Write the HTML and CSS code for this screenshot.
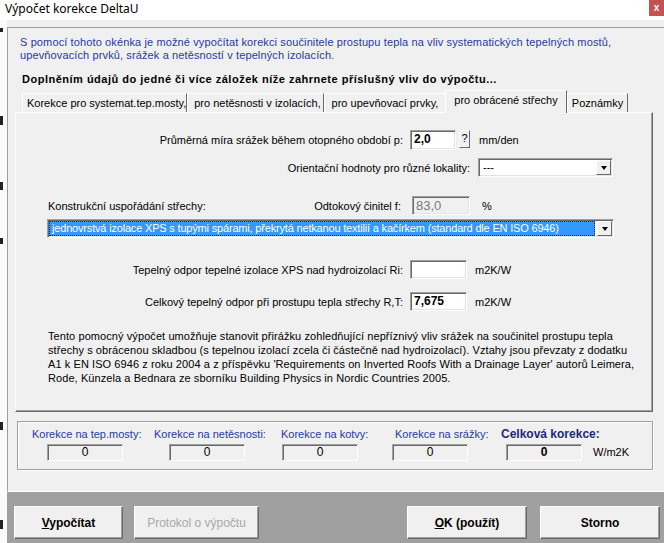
FILE: index.html
```html
<!DOCTYPE html>
<html lang="cs">
<head>
<meta charset="utf-8">
<title>Výpočet korekce DeltaU</title>
<link rel="stylesheet" href="styles.css">
</head>
<body>
<div class="titlebar"><span class="title">Výpočet korekce DeltaU</span><span class="close">x</span></div>
<div class="frame">
  <div class="leftstrip">
    <i class="tick t1"></i><i class="tick t2"></i><i class="tick t3"></i><i class="tick t4"></i><i class="tick t5"></i><i class="tick t6"></i>
  </div>
  <div class="dialog">
    <div class="panel">
      <p class="info">S pomocí tohoto okénka je možné vypočítat korekci součinitele prostupu tepla na vliv systematických tepelných mostů,<br>upevňovacích prvků, srážek a netěsností v tepelných izolacích.</p>
      <p class="heading">Doplněním údajů do jedné či více záložek níže zahrnete příslušný vliv do výpočtu...</p>
      <div class="tabs">
        <div class="tab tw1">Korekce pro systemat.tep.mosty,</div>
        <div class="tab tw2">pro netěsnosti v izolacích,</div>
        <div class="tab tw3">pro upevňovací prvky,</div>
        <div class="tab tw4 active">pro obrácené střechy</div>
        <div class="tab tw5">Poznámky</div>
      </div>
      <div class="tabpanel">
        <div class="row r1">
          <span class="lbl w387">Průměrná míra srážek během otopného období p:</span>
          <span class="edit e1">2,0</span>
          <span class="qbtn">?</span>
          <span class="unit u1">mm/den</span>
        </div>
        <div class="row r2">
          <span class="lbl w454">Orientační hodnoty pro různé lokality:</span>
          <div class="select s1"><span class="val">---</span><span class="arrow"></span></div>
        </div>
        <div class="row r3">
          <span class="lbl l-konst">Konstrukční uspořádání střechy:</span>
          <span class="lbl l-odt">Odtokový činitel f:</span>
          <span class="edit e-dis">83,0</span>
          <span class="unit u3">%</span>
        </div>
        <div class="select s2"><span class="val hl">jednovrstvá izolace XPS s tupými spárami, překrytá netkanou textilií a kačírkem (standard dle EN ISO 6946)</span><span class="arrow"></span></div>
        <div class="row r5">
          <span class="lbl w387">Tepelný odpor tepelné izolace XPS nad hydroizolací Ri:</span>
          <span class="edit e2"></span>
          <span class="unit u5">m2K/W</span>
        </div>
        <div class="row r6">
          <span class="lbl w387">Celkový tepelný odpor při prostupu tepla střechy R,T:</span>
          <span class="edit e2">7,675</span>
          <span class="unit u5">m2K/W</span>
        </div>
        <p class="note">Tento pomocný výpočet umožňuje stanovit přirážku zohledňující nepříznivý vliv srážek na součinitel prostupu tepla<br>střechy s obrácenou skladbou (s tepelnou izolací zcela či částečně nad hydroizolací). Vztahy jsou převzaty z dodatku<br>A1 k EN ISO 6946 z roku 2004 a z příspěvku 'Requirements on Inverted Roofs With a Drainage Layer' autorů Leimera,<br>Rode, Künzela a Bednara ze sborníku Building Physics in Nordic Countries 2005.</p>
      </div>
      <div class="group">
        <div class="gcol gc1"><span class="gl">Korekce na tep.mosty:</span><span class="gbox gb15">0</span></div>
        <div class="gcol gc2"><span class="gl">Korekce na netěsnosti:</span><span class="gbox gb15">0</span></div>
        <div class="gcol gc3"><span class="gl">Korekce na kotvy:</span><span class="gbox gb1">0</span></div>
        <div class="gcol gc4"><span class="gl gl3">Korekce na srážky:</span><span class="gbox">0</span></div>
        <div class="gcol gc5"><span class="gl total">Celková korekce:</span><div class="gline"><span class="gbox gb5 bold">0</span><span class="gunit">W/m2K</span></div></div>
      </div>
    </div>
    <div class="btnbar">
      <div class="btn b1"><span><u>V</u>ypočítat</span></div>
      <div class="btn b2 disabled">Protokol o výpočtu</div>
      <div class="btn b3"><span><u>O</u>K (použít)</span></div>
      <div class="btn b4">Storno</div>
    </div>
  </div>
</div>
</body>
</html>
```

FILE: styles.css
```css
* { box-sizing: border-box; }
html, body { margin: 0; padding: 0; }
body {
  width: 664px; height: 543px; overflow: hidden; background: #fff;
  font-family: "Liberation Sans", Arial, sans-serif; font-size: 11px; color: #000;
}
.titlebar { height: 20px; position: relative; background: #fff; }
.title {
  display: block; padding-left: 5px; font-family: "Noto Sans", "Open Sans", sans-serif;
  font-size: 12px; line-height: 17px; color: #000;
}
.close {
  position: absolute; right: 0; top: 0; width: 15px; height: 16px; background: #c75050;
  color: #fff; font: bold 10px/15px "Liberation Sans", sans-serif; text-align: center;
}
.frame { display: flex; height: 523px; }
.leftstrip { width: 7px; position: relative; background: #fbfbfb; }
.tick { position: absolute; left: 0; width: 3px; background: #222; }
.t1 { top: 8px; height: 4px; }
.t2 { top: 96px; height: 9px; }
.t3 { top: 162px; height: 8px; }
.t4 { top: 218px; height: 6px; }
.t5 { top: 402px; height: 8px; }
.t6 { top: 500px; height: 9px; }

.dialog { flex: 1; display: flex; flex-direction: column; background: #f0f0f0; padding-top: 7px; }
.panel {
  height: 465px; border-top: 1px solid #a0a0a0; border-left: 1px solid #a0a0a0;
  border-bottom: 1px solid #fff;
}
.info { margin: 0; padding: 8px 0 0 12px; color: #1f3aa6; line-height: 13px; white-space: nowrap; letter-spacing: 0.12px; }
.heading { margin: 10px 0 0 14px; font-weight: bold; letter-spacing: 0.5px; line-height: 14px; white-space: nowrap; }

.tabs { display: flex; align-items: flex-end; height: 21px; margin: 5px 0 0 14px; position: relative; z-index: 1; }
.tab {
  height: 19px; border-left: 1px solid #fff; border-top: 1px solid #fff; border-right: 1px solid #696969;
  text-align: center; line-height: 18px; white-space: nowrap; background: #f0f0f0;
}
.tw1 { width: 165px; padding-left: 4px; }
.tw2 { width: 137px; padding-left: 4px; }
.tw3 { width: 121px; border-right: none; }
.tw4 { width: 122px; }
.tw5 { width: 61px; }
.tab.active { height: 23px; margin-bottom: -1px; line-height: 19px; }

.tabpanel {
  height: 300px; margin: 0 11px 0 7px; border-top: 1px solid #fff; border-left: 1px solid #fff;
  border-right: 1px solid #696969; border-bottom: 1px solid #696969;
  box-shadow: inset -1px -1px #a0a0a0;
}
.row { display: flex; align-items: center; }
.lbl { white-space: nowrap; }
.w387 { width: 387px; text-align: right; }
.w454 { width: 454px; text-align: right; }
.r1 { margin-top: 17px; height: 20px; }
.r2 { margin-top: 8px; height: 19px; }
.r3 { margin-top: 19px; height: 19px; }
.r5 { margin-top: 22px; height: 19px; }
.r6 { margin-top: 13px; height: 19px; }
.l-konst { margin-left: 32px; width: 252px; }
.l-odt { width: 101px; text-align: right; }

.edit {
  display: block; height: 100%; background: #fff; border: 1px solid;
  border-color: #a0a0a0 #fff #fff #a0a0a0; box-shadow: inset 1px 1px #696969, inset -1px -1px #e3e3e3;
  padding-left: 3px; font-weight: bold; font-size: 12px; line-height: 17px; white-space: nowrap;
}
.e1 { margin-left: 7px; width: 46px; }
.e2 { margin-left: 7px; width: 57px; }
.e-dis {
  margin-left: 11px; width: 58px; background: #f0f0f0; color: #7a7a7a; font-weight: normal; font-size: 13px;
}
.qbtn {
  margin-left: 3px; width: 11px; height: 18px; align-self: flex-start; background: #f0f0f0;
  border: 1px solid; border-color: #fff #696969 #696969 #fff; text-align: center; line-height: 15px; font-size: 11px;
}
.unit { white-space: nowrap; }
.u1 { margin-left: 9px; }
.u3 { margin-left: 12px; }
.u5 { margin-left: 8px; }

.select {
  display: flex; background: #fff; border: 1px solid;
  border-color: #a0a0a0 #fff #fff #a0a0a0; box-shadow: inset 1px 1px #696969, inset -1px -1px #e3e3e3;
  padding: 1px;
}
.select .val { flex: 1; padding-left: 3px; line-height: 15px; white-space: nowrap; overflow: hidden; }
.select .arrow {
  width: 15px; background: #f0f0f0; border: 1px solid; border-color: #fff #696969 #696969 #fff;
  display: flex; align-items: center; justify-content: center;
}
.select .arrow::after {
  content: ""; border-left: 3.5px solid transparent; border-right: 3.5px solid transparent; border-top: 4px solid #000;
}
.s1 { margin-left: 8px; width: 135px; height: 19px; }
.s2 { margin: 4px 0 0 31px; width: 567px; height: 19px; }
.val.hl {
  background: #3399ff; color: #fff; margin-right: 2px; letter-spacing: -0.18px;
  outline: 1px dotted #0a246a; outline-offset: -1px;
}

.note { margin: 18px 0 0 32px; line-height: 14px; white-space: nowrap; letter-spacing: 0.08px; }

.group {
  height: 49px; margin: 9px 11px 0 9px; border: 1px solid #a0a0a0;
  box-shadow: 1px 1px #fff, inset 1px 1px #fff; display: flex; padding: 6px 0 0 14px;
}
.gcol { display: flex; flex-direction: column; }
.gc1 { width: 122px; }
.gc2 { width: 127px; }
.gc3 { width: 111px; }
.gc4 { width: 109px; }
.gc5 { flex: 1; }
.gl { color: #1f3aa6; line-height: 13px; white-space: nowrap; }
.gl3 { margin-left: 3px; }
.gl.total { color: #1c2a78; font-weight: bold; font-size: 12px; }
.gbox {
  display: block; width: 76px; height: 17px; margin-top: 3px; background: #f0f0f0; border: 1px solid;
  border-color: #a0a0a0 #fff #fff #a0a0a0; box-shadow: inset 1px 1px #696969;
  text-align: center; font-size: 12px; line-height: 15px;
}
.gb15 { margin-left: 15px; }
.gb1 { margin-left: 1px; }
.gline { display: flex; align-items: center; }
.gb5 { margin-left: 5px; }
.bold { font-weight: bold; }
.gunit { margin-left: 11px; margin-top: 1px; }

.btnbar { height: 51px; background: #a0a0a0; display: flex; padding: 14px 0 0 7px; }
.btn {
  height: 33px; background: #f0f0f0; border: 1px solid; border-color: #fff #696969 #696969 #fff;
  box-shadow: inset -1px -1px #a0a0a0; font-weight: bold; font-size: 12px;
  display: flex; align-items: center; justify-content: center; white-space: nowrap;
}
.b1 { width: 109px; }
.b2 { width: 125px; margin-left: 11px; }
.b3 { width: 120px; margin-left: 148px; }
.b4 { width: 120px; margin-left: 13px; }
.btn.disabled { font-weight: normal; color: #a8a8a8; }
```
